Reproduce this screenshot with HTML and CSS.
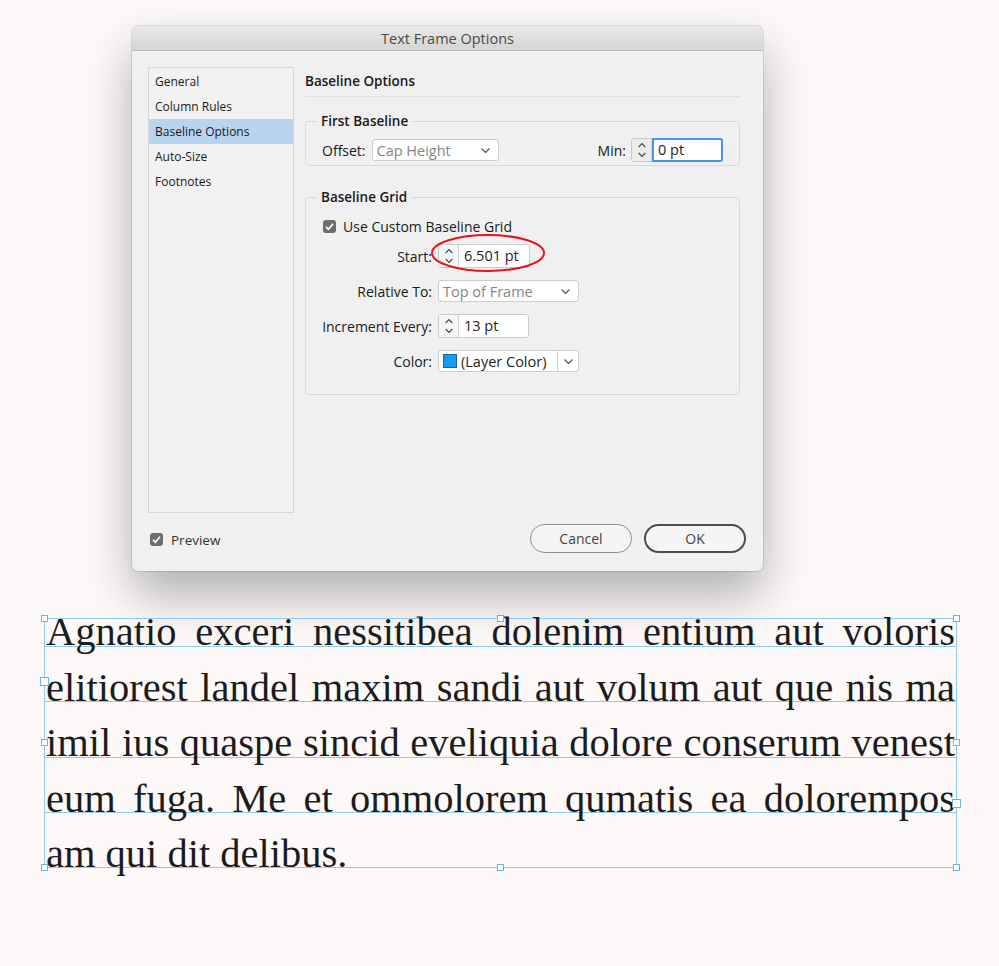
FILE: index.html
```html
<!DOCTYPE html>
<html lang="en">
<head>
<meta charset="UTF-8">
<meta name="viewport" content="width=device-width, initial-scale=1.0">
<title>Text Frame Options</title>
<link rel="stylesheet" href="styles.css">
</head>
<body>

<div class="page">
    <div class="dialog">
        <div class="titlebar">Text Frame Options</div>

        <div class="dialog-body">
            <ul class="sidebar">
                <li>General</li>
                <li>Column Rules</li>
                <li class="active">Baseline Options</li>
                <li>Auto-Size</li>
                <li>Footnotes</li>
            </ul>

            <div class="panel">
                <h2 class="panel-title">Baseline Options</h2>

                <fieldset class="group first-baseline">
                    <legend>First Baseline</legend>
                    <div class="row">
                        <label class="offset-label">Offset:</label>
                        <div class="select offset">
                            <span>Cap Height</span>
                            <svg class="caret" width="9" height="5" viewBox="0 0 9 5"><path d="M0.5 0.5 L4.5 4.5 L8.5 0.5" fill="none" stroke="#555" stroke-width="1.2"/></svg>
                        </div>
                        <label class="min-label">Min:</label>
                        <div class="spinner min focused">
                            <span class="arrows">
                                <svg width="8" height="16" viewBox="0 0 8 16"><path d="M0.7 5 L4 1.5 L7.3 5 M0.7 11 L4 14.5 L7.3 11" fill="none" stroke="#444" stroke-width="1.1"/></svg>
                            </span>
                            <span class="value">0 pt</span>
                        </div>
                    </div>
                </fieldset>

                <fieldset class="group baseline-grid">
                    <legend>Baseline Grid</legend>
                    <div class="check-row">
                        <span class="checkbox">
                            <svg width="13" height="13" viewBox="0 0 13 13"><path d="M3 6.8 L5.4 9.2 L10 3.8" fill="none" stroke="#fff" stroke-width="1.7"/></svg>
                        </span>
                        Use Custom Baseline Grid
                    </div>

                    <div class="form-grid">
                        <label>Start:</label>
                        <div class="spinner start">
                            <span class="arrows">
                                <svg width="8" height="16" viewBox="0 0 8 16"><path d="M0.7 5 L4 1.5 L7.3 5 M0.7 11 L4 14.5 L7.3 11" fill="none" stroke="#444" stroke-width="1.1"/></svg>
                            </span>
                            <span class="value">6.501 pt</span>
                            <svg class="annotation" width="116" height="40" viewBox="0 0 116 40"><ellipse cx="58" cy="20" rx="56" ry="18" fill="none" stroke="#e3161b" stroke-width="2"/></svg>
                        </div>

                        <label>Relative To:</label>
                        <div class="select wide">
                            <span>Top of Frame</span>
                            <svg class="caret" width="9" height="5" viewBox="0 0 9 5"><path d="M0.5 0.5 L4.5 4.5 L8.5 0.5" fill="none" stroke="#555" stroke-width="1.2"/></svg>
                        </div>

                        <label>Increment Every:</label>
                        <div class="spinner increment">
                            <span class="arrows">
                                <svg width="8" height="16" viewBox="0 0 8 16"><path d="M0.7 5 L4 1.5 L7.3 5 M0.7 11 L4 14.5 L7.3 11" fill="none" stroke="#444" stroke-width="1.1"/></svg>
                            </span>
                            <span class="value">13 pt</span>
                        </div>

                        <label>Color:</label>
                        <div class="select wide color">
                            <span class="swatch"></span>
                            <span class="color-name">(Layer Color)</span>
                            <span class="caret-box">
                                <svg class="caret" width="9" height="5" viewBox="0 0 9 5"><path d="M0.5 0.5 L4.5 4.5 L8.5 0.5" fill="none" stroke="#555" stroke-width="1.2"/></svg>
                            </span>
                        </div>
                    </div>
                </fieldset>
            </div>
        </div>

        <div class="dialog-footer">
            <div class="preview">
                <span class="checkbox">
                    <svg width="13" height="13" viewBox="0 0 13 13"><path d="M3 6.8 L5.4 9.2 L10 3.8" fill="none" stroke="#fff" stroke-width="1.7"/></svg>
                </span>
                Preview
            </div>
            <div class="buttons">
                <button class="btn">Cancel</button>
                <button class="btn primary">OK</button>
            </div>
        </div>
    </div>

    <div class="frame">
        <span class="handle h-tl"></span>
        <span class="handle h-tm"></span>
        <span class="handle h-tr"></span>
        <span class="handle h-in"></span>
        <span class="handle h-ml"></span>
        <span class="handle h-mr"></span>
        <span class="handle h-out"></span>
        <span class="handle h-bl"></span>
        <span class="handle h-bm"></span>
        <span class="handle h-br"></span>

        <div class="copy">
            <span>Agnatio exceri nessitibea dolenim entium aut voloris</span>
            <span>elitiorest landel maxim sandi aut volum aut que nis ma</span>
            <span>imil ius quaspe sincid eveliquia dolore conserum venest</span>
            <span>eum fuga. Me et ommolorem qumatis ea dolorempos</span>
            <span class="last">am qui dit delibus.</span>
        </div>
    </div>
</div>

</body>
</html>
```

FILE: styles.css
```css
body {
    margin: 0;
    background: #fcf9f8;
    font-family: 'Open Sans', 'Liberation Sans', sans-serif;
    color: #1a1a1a;
}

.page {
    padding: 26px 0 98px;
}

/* dialog */

.dialog {
    width: 631px;
    height: 545px;
    margin-left: 132px;
    box-sizing: border-box;
    background: #f0f0f0;
    border-radius: 6px;
    box-shadow: 0 0 0 1px rgba(0,0,0,0.1), 0 24px 50px rgba(0,0,0,0.3);
    overflow: hidden;
    display: flex;
    flex-direction: column;
}

.titlebar {
    height: 24px;
    line-height: 26px;
    border-bottom: 1px solid #b9b9b9;
    background: linear-gradient(#e9e9e9, #d5d5d5);
    text-align: center;
    font-size: 14.5px;
    color: #4a4a4a;
}

.dialog-body {
    display: flex;
    padding: 16px 0 0 16px;
}

.sidebar {
    list-style: none;
    margin: 0;
    padding: 1px 0 0;
    width: 146px;
    height: 446px;
    box-sizing: border-box;
    border: 1px solid #d6d6d6;
    background: #f2f2f2;
    font-size: 12px;
}

.sidebar li {
    height: 25px;
    line-height: 26px;
    padding-left: 6px;
}

.sidebar li.active {
    background: #b9d4f0;
}

.panel {
    margin-left: 11px;
    width: 435px;
}

.panel-title {
    margin: 0;
    padding: 5px 0 6px;
    line-height: 18px;
    font-size: 13.5px;
    font-weight: 600;
    border-bottom: 1px solid #e0e0e0;
}

.group {
    margin: 15px 0 0;
    padding: 8px 16px 3px;
    border: 1px solid #d9d9d9;
    border-radius: 4px;
    min-width: 0;
}

.group legend {
    padding: 0 4px;
    margin-left: -5px;
    font-size: 13.5px;
    font-weight: 600;
    line-height: 18px;
}

.baseline-grid {
    margin-top: 22px;
    padding-top: 11px;
    padding-bottom: 21px;
}

label {
    font-size: 14px;
    color: #1a1a1a;
}

.row {
    display: flex;
    align-items: center;
    height: 24px;
}

.offset-label {
    margin-right: 6px;
}

.min-label {
    margin-left: auto;
    margin-right: 5px;
}

/* controls */

.select {
    height: 22px;
    box-sizing: border-box;
    display: flex;
    align-items: center;
    justify-content: space-between;
    padding: 0 8px 0 4px;
    border: 1px solid #cdcdcd;
    border-radius: 3px;
    background: #fff;
    font-size: 14.5px;
    color: #858585;
}

.select.offset {
    width: 127px;
}

.select.wide {
    width: 141px;
}

.select.color {
    justify-content: flex-start;
    padding-right: 0;
    color: #1e1e1e;
}

.swatch {
    width: 12px;
    height: 12px;
    background: #1a9af3;
    border: 1px solid #1566a3;
    margin-right: 4px;
}

.color-name {
    flex: 1;
}

.caret-box {
    width: 20px;
    height: 100%;
    border-left: 1px solid #d2d2d2;
    display: flex;
    align-items: center;
    justify-content: center;
}

.spinner {
    position: relative;
    display: flex;
    width: 92px;
    height: 24px;
    box-sizing: border-box;
    border: 1px solid #cacaca;
    border-radius: 3px;
    background: #fff;
}

.spinner.increment {
    width: 91px;
}

.spinner .arrows {
    width: 19px;
    border-right: 1px solid #d4d4d4;
    background: #f6f6f6;
    display: flex;
    align-items: center;
    justify-content: center;
    border-radius: 3px 0 0 3px;
}

.spinner .value {
    flex: 1;
    padding-left: 5px;
    font-size: 14.5px;
    line-height: 22px;
    color: #1e1e1e;
}

.spinner.min .arrows {
    background: #ebebeb;
}

.spinner.focused .value {
    margin: -1px -1px -1px 0;
    border: 2px solid #4a95e9;
    border-radius: 0 3px 3px 0;
    padding-left: 4px;
    line-height: 20px;
}

.annotation {
    position: absolute;
    left: -9px;
    top: -12px;
    pointer-events: none;
}

.check-row {
    display: flex;
    align-items: center;
    height: 18px;
    margin-bottom: 9px;
    font-size: 14px;
}

.checkbox {
    width: 13px;
    height: 13px;
    border-radius: 3px;
    background: #6d6d6d;
    display: inline-flex;
    margin: 0 7px 0 1px;
}

.form-grid {
    display: grid;
    grid-template-columns: 110px auto;
    grid-auto-rows: 24px;
    column-gap: 6px;
    row-gap: 11px;
    align-items: center;
    justify-items: start;
}

.form-grid label {
    justify-self: end;
}

/* footer */

.dialog-footer {
    display: flex;
    align-items: center;
    padding: 11px 17px 0 18px;
}

.preview {
    display: flex;
    align-items: center;
    margin-top: 2px;
    font-size: 13.5px;
    color: #333;
}

.preview .checkbox {
    margin: 0 8px 0 0;
}

.buttons {
    margin-left: auto;
    display: flex;
    gap: 12px;
}

.btn {
    width: 102px;
    height: 29px;
    box-sizing: border-box;
    border: 1px solid #8e8e8e;
    border-radius: 15px;
    background: #f5f5f5;
    font-family: inherit;
    font-size: 14px;
    color: #444;
    padding: 0;
}

.btn.primary {
    border: 2px solid #4d4d4d;
}

/* text frame */

.frame {
    position: relative;
    margin: 47px 0 0 44px;
    width: 913px;
    height: 250px;
    box-sizing: border-box;
    border: 1px solid #8ecaf2;
    background:
        linear-gradient(#8ecaf2, #8ecaf2) 0 27px / 100% 1px no-repeat,
        linear-gradient(#8ecaf2, #8ecaf2) 0 82px / 100% 1px no-repeat,
        linear-gradient(#8ecaf2, #8ecaf2) 0 138px / 100% 1px no-repeat,
        linear-gradient(#8ecaf2, #8ecaf2) 0 193px / 100% 1px no-repeat;
}

.copy {
    margin-top: -15px;
    padding: 0 1px;
    font-family: 'Liberation Serif', serif;
    font-size: 40.5px;
    line-height: 55.5px;
    color: #1c1c1c;
}

.copy span {
    display: block;
    white-space: nowrap;
    text-align: justify;
    text-align-last: justify;
}

.copy span.last {
    text-align-last: auto;
}

.handle {
    position: absolute;
    width: 5px;
    height: 5px;
    border: 1px solid #5fb6f0;
    background: #fff;
}

.h-tl { left: -4px; top: -4px; }
.h-tm { left: calc(50% - 4px); top: -4px; }
.h-tr { right: -4px; top: -4px; }
.h-in { left: -5px; top: 58px; width: 7px; height: 7px; }
.h-ml { left: -4px; top: calc(50% - 4px); }
.h-mr { right: -4px; top: calc(50% - 4px); }
.h-out { right: -5px; top: 180px; width: 7px; height: 7px; }
.h-bl { left: -4px; bottom: -4px; }
.h-bm { left: calc(50% - 4px); bottom: -4px; }
.h-br { right: -4px; bottom: -4px; }
```
